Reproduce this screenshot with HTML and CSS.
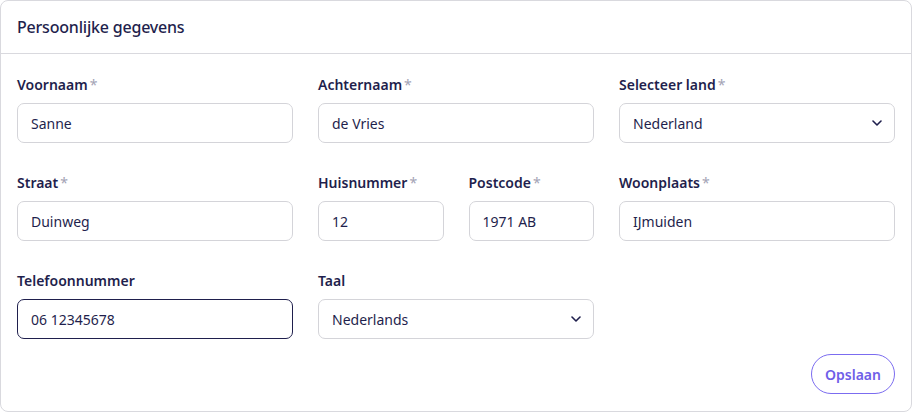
FILE: index.html
```html
<!DOCTYPE html>
<html lang="nl">
<head>
<meta charset="utf-8">
<title>Persoonlijke gegevens</title>
<link rel="stylesheet" href="styles.css">
</head>
<body>
<section class="card">
  <header class="card-header">
    <h2 class="card-title">Persoonlijke gegevens</h2>
  </header>
  <form class="card-body">
    <div class="grid">
      <div class="field">
        <label class="label">Voornaam<span class="req">*</span></label>
        <div class="input">Sanne</div>
      </div>
      <div class="field">
        <label class="label">Achternaam<span class="req">*</span></label>
        <div class="input">de Vries</div>
      </div>
      <div class="field">
        <label class="label">Selecteer land<span class="req">*</span></label>
        <div class="input select">Nederland
          <svg class="chev" width="10" height="6" viewBox="0 0 10 6"><path d="M1 1l4 4 4-4" fill="none" stroke="#1f1f4d" stroke-width="1.6" stroke-linecap="round" stroke-linejoin="round"/></svg>
        </div>
      </div>

      <div class="field">
        <label class="label">Straat<span class="req">*</span></label>
        <div class="input">Duinweg</div>
      </div>
      <div class="split">
        <div class="field">
          <label class="label">Huisnummer<span class="req">*</span></label>
          <div class="input">12</div>
        </div>
        <div class="field">
          <label class="label">Postcode<span class="req">*</span></label>
          <div class="input">1971 AB</div>
        </div>
      </div>
      <div class="field">
        <label class="label">Woonplaats<span class="req">*</span></label>
        <div class="input">IJmuiden</div>
      </div>

      <div class="field">
        <label class="label">Telefoonnummer</label>
        <div class="input focus">06 12345678</div>
      </div>
      <div class="field">
        <label class="label">Taal</label>
        <div class="input select">Nederlands
          <svg class="chev" width="10" height="6" viewBox="0 0 10 6"><path d="M1 1l4 4 4-4" fill="none" stroke="#1f1f4d" stroke-width="1.6" stroke-linecap="round" stroke-linejoin="round"/></svg>
        </div>
      </div>
    </div>
    <div class="actions">
      <button type="button" class="btn">Opslaan</button>
    </div>
  </form>
</section>
</body>
</html>
```

FILE: styles.css
```css
* { box-sizing: border-box; }
html, body { margin: 0; padding: 0; background: #fff; }
body {
  font-family: "Noto Sans", "Open Sans", sans-serif;
  color: #1f1f4d;
  width: 912px;
  height: 412px;
}
.card {
  width: 912px;
  height: 412px;
  border: 1px solid #d9d9de;
  border-radius: 8px;
  background: #fff;
  overflow: hidden;
}
.card-header {
  height: 53px;
  border-bottom: 1px solid #d9d9de;
  padding: 0 16px;
  display: flex;
  align-items: center;
}
.card-title {
  margin: 0;
  font-size: 16px;
  font-weight: 500;
  letter-spacing: -0.2px;
  color: #1f1f4d;
}
.card-body {
  padding: 21px 16px 16px 16px;
  margin: 0;
}
.grid {
  display: grid;
  grid-template-columns: repeat(3, 276px);
  column-gap: 25px;
  row-gap: 30px;
}
.split {
  display: grid;
  grid-template-columns: 1fr 1fr;
  column-gap: 25px;
}
.field { display: flex; flex-direction: column; }
.label {
  height: 20px;
  line-height: 20px;
  font-size: 14px;
  font-weight: 600;
  color: #1f1f4d;
  margin-bottom: 8px;
  display: block;
}
.req {
  color: #a3a3b5;
  font-weight: 400;
  margin-left: 2px;
}
.input {
  height: 40px;
  border: 1px solid #d4d4d9;
  border-radius: 7px;
  padding: 0 13px;
  display: flex;
  align-items: center;
  font-size: 14px;
  color: #1f1f4d;
  background: #fff;
}
.input.focus { border-color: #1f1f4d; }
.select { justify-content: space-between; padding-right: 12px; }
.chev { display: block; }
.actions {
  display: flex;
  justify-content: flex-end;
  margin-top: 15px;
}
.btn {
  height: 40px;
  width: 84px;
  border: 1px solid #7b6cf0;
  border-radius: 20px;
  background: #fff;
  color: #6f5ee8;
  font-family: inherit;
  font-size: 14px;
  font-weight: 600;
  padding: 0;
}
```
